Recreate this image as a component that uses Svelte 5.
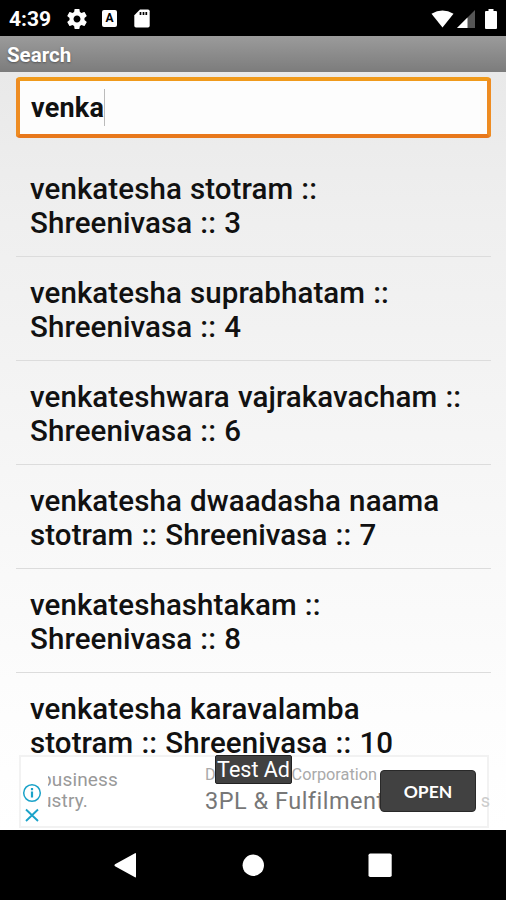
<script>
	let query = $state('venka');

	const results = [
		['venkatesha stotram ::', 'Shreenivasa :: 3'],
		['venkatesha suprabhatam ::', 'Shreenivasa :: 4'],
		['venkateshwara vajrakavacham ::', 'Shreenivasa :: 6'],
		['venkatesha dwaadasha naama', 'stotram :: Shreenivasa :: 7'],
		['venkateshashtakam ::', 'Shreenivasa :: 8'],
		['venkatesha karavalamba', 'stotram :: Shreenivasa :: 10']
	];
</script>

<div class="screen">
	<header class="status">
		<span class="time">4:39</span>
		<svg class="gear" width="20" height="20" viewBox="2 2 20 20">
			<path fill="#fff" d="M19.43 12.98c.04-.32.07-.64.07-.98s-.03-.66-.07-.98l2.11-1.65c.19-.15.24-.42.12-.64l-2-3.46c-.12-.22-.39-.3-.61-.22l-2.49 1c-.52-.4-1.08-.73-1.69-.98l-.38-2.65C14.46 2.18 14.25 2 14 2h-4c-.25 0-.46.18-.49.42l-.38 2.65c-.61.25-1.17.59-1.69.98l-2.49-1c-.23-.09-.49 0-.61.22l-2 3.46c-.13.22-.07.49.12.64l2.11 1.65c-.04.32-.07.65-.07.98s.03.66.07.98l-2.11 1.65c-.19.15-.24.42-.12.64l2 3.46c.12.22.39.3.61.22l2.49-1c.52.4 1.08.73 1.69.98l.38 2.65c.03.24.24.42.49.42h4c.25 0 .46-.18.49-.42l.38-2.65c.61-.25 1.17-.59 1.69-.98l2.49 1c.23.09.49 0 .61-.22l2-3.46c.12-.22.07-.49-.12-.64l-2.11-1.65zM12 15.5c-1.93 0-3.5-1.57-3.5-3.5s1.57-3.5 3.5-3.5 3.5 1.57 3.5 3.5-1.57 3.5-3.5 3.5z" />
		</svg>
		<span class="keyboard">A</span>
		<svg class="card" width="16" height="19" viewBox="0 0 16 19">
			<path fill="#fff" d="M6 .5h8Q15.7.5 15.7 2.2v14.6q0 1.7-1.7 1.7H2Q.3 18.500.3 16.800V6.200z" />
			<path stroke="#000" stroke-width="1.7" d="M6.500 3v3M9.500 3v3M12.300 3v3" />
		</svg>
		<span class="gap"></span>
		<svg class="wifi" width="23" height="18" viewBox="0 0 24 18">
			<path fill="#fff" d="M.5 3.500Q12-3 23.500 3.500L12 17.800z" />
		</svg>
		<svg class="signal" width="18" height="18" viewBox="0 0 18 18">
			<path fill="#555" d="M18 0v18H0z" />
			<path fill="#fff" d="M10.500 7.500V18H0z" />
		</svg>
		<svg class="battery" width="12" height="20" viewBox="0 0 12 20">
			<path fill="#fff" d="M3.500 0h5v2H11q1 0 1 1v16q0 1-1 1H1q-1 0-1-1V3q0-1 1-1h2.500z" />
		</svg>
	</header>

	<div class="title">Search</div>

	<main>
		<div class="field"><span>{query}</span><i class="caret"></i></div>

		<ul>
			{#each results as [first, second]}
				<li>{first}<br />{second}</li>
			{/each}
		</ul>
	</main>

	<section class="ad">
		<div class="blurb">business<br />ustry.</div>
		<div class="company">
			<div class="name"><span>D</span><span>Corporation</span></div>
			<div class="headline">3PL &amp; Fulfilment</div>
		</div>
		<span class="clipped">s</span>
		<button>OPEN</button>
		<span class="label">Test Ad</span>
		<div class="choices">
			<svg width="20" height="42" viewBox="0 0 20 42" fill="none" stroke="#1ba3c9">
				<circle cx="10" cy="10" r="8.300" stroke-width="1.500" />
				<path stroke-width="2.200" d="M10 8.500v6M10 5v2.200" />
				<path stroke-width="1.900" d="M4 26.500l12 11.500M16 26.500L4 38" />
			</svg>
		</div>
	</section>

	<nav>
		<svg width="506" height="70" viewBox="0 0 506 70" fill="#fff">
			<path d="M115 34.200L135 23.200q1-.500 1 .800v22.500q0 1.300-1 .700L115 36.200q-1.300-1 0-2z" />
			<circle cx="253.300" cy="35.300" r="10.700" />
			<rect x="368.500" y="23.500" width="23.200" height="23.500" rx="1.800" />
		</svg>
	</nav>
</div>

<style>
	.screen {
		position: relative;
		display: flex;
		flex-direction: column;
		width: 506px;
		height: 900px;
		overflow: hidden;
		background: #000;
		font-family: Roboto, "Liberation Sans", sans-serif;
	}

	.status {
		flex: none;
		display: flex;
		align-items: center;
		box-sizing: border-box;
		height: 36px;
		padding: 1px 9px 0;
		color: #fff;
	}

	.time {
		width: 58px;
		font-size: 21px;
		font-weight: 700;
		line-height: 34px;
	}

	.gear {
		margin-right: 15px;
	}

	.keyboard {
		width: 15px;
		height: 17px;
		margin-right: 17px;
		border-radius: 2px;
		background: #fff;
		color: #000;
		font-size: 12px;
		font-weight: 700;
		line-height: 17px;
		text-align: center;
	}

	.gap {
		flex: 1;
	}

	.wifi {
		margin-right: 3px;
	}

	.signal {
		margin-right: 10px;
	}

	.title {
		flex: none;
		box-sizing: border-box;
		height: 36px;
		padding-left: 7px;
		background: linear-gradient(#9b9b9b, #7c7c7c);
		color: #fff;
		font-size: 20.500px;
		font-weight: 700;
		line-height: 38px;
		text-shadow: 0 1px 2px #555;
	}

	main {
		flex: none;
		box-sizing: border-box;
		height: 758px;
		padding: 5px 15px 0 16px;
		overflow: hidden;
		background: linear-gradient(#e9e9e9, #efefef 20%, #fdfdfd 85%, #fff);
	}

	.field {
		display: flex;
		align-items: center;
		box-sizing: border-box;
		height: 61px;
		padding-left: 11px;
		border: 4px solid;
		border-color: #f09a1c #ee8c22 #e8781c;
		border-radius: 4px;
		background: #fdfdfd;
		color: #111;
		font-size: 27px;
		font-weight: 700;
		letter-spacing: 0.200px;
	}

	.caret {
		width: 1px;
		height: 37px;
		background: #bbb;
	}

	ul {
		margin: 15px 0 0;
		padding: 0;
		list-style: none;
	}

	li {
		box-sizing: border-box;
		height: 104.100px;
		padding: 19px 0 0 14px;
		border-bottom: 1px solid #dcdcdc;
		color: #111;
		font-size: 29.500px;
		font-weight: 500;
		letter-spacing: 0.080px;
		word-spacing: 0.700px;
		line-height: 34px;
		white-space: nowrap;
	}

	li:last-child {
		border-bottom: 0;
	}

	/* the banner covers the bottom of the list */
	.ad {
		position: absolute;
		top: 755px;
		left: 19px;
		display: flex;
		box-sizing: border-box;
		width: 470px;
		height: 73px;
		border: 2px solid #f2f2f2;
		background: #fff;
		color: #999;
	}

	.blurb {
		box-sizing: border-box;
		width: 184px;
		padding: 12px 0 0 20px;
		font-size: 19px;
		letter-spacing: 0.150px;
		line-height: 21px;
	}

	.company {
		white-space: nowrap;
	}

	.name {
		display: flex;
		justify-content: space-between;
		width: 172px;
		margin-top: 9px;
		color: #aaa;
		font-size: 16.300px;
		line-height: 18px;
	}

	.headline {
		margin-top: 4px;
		color: #777;
		font-size: 23.500px;
		letter-spacing: 0.500px;
		line-height: 27px;
	}

	.clipped {
		position: absolute;
		top: 33px;
		right: -3px;
		color: #ccc;
		font-size: 18px;
	}

	button {
		position: absolute;
		top: 13px;
		left: 359px;
		width: 96px;
		height: 42px;
		padding: 0;
		border: 1px solid #292929;
		border-radius: 4px;
		background: #414141;
		color: #fff;
		font-family: Lato, sans-serif;
		font-size: 17.500px;
		font-weight: 700;
	}

	.label {
		position: absolute;
		top: -2px;
		left: 194px;
		box-sizing: border-box;
		width: 77px;
		height: 29px;
		border: 1px solid #222;
		border-radius: 2px;
		background: #414141;
		color: #fff;
		font-size: 21.500px;
		line-height: 28px;
		text-align: center;
		white-space: nowrap;
	}

	.choices {
		position: absolute;
		top: 0;
		left: 1px;
		box-sizing: border-box;
		width: 26px;
		height: 69px;
		padding-top: 26px;
		background: #fff;
	}

	nav {
		flex: none;
		height: 70px;
		background: #000;
	}

	svg {
		display: block;
		flex: none;
	}
</style>
